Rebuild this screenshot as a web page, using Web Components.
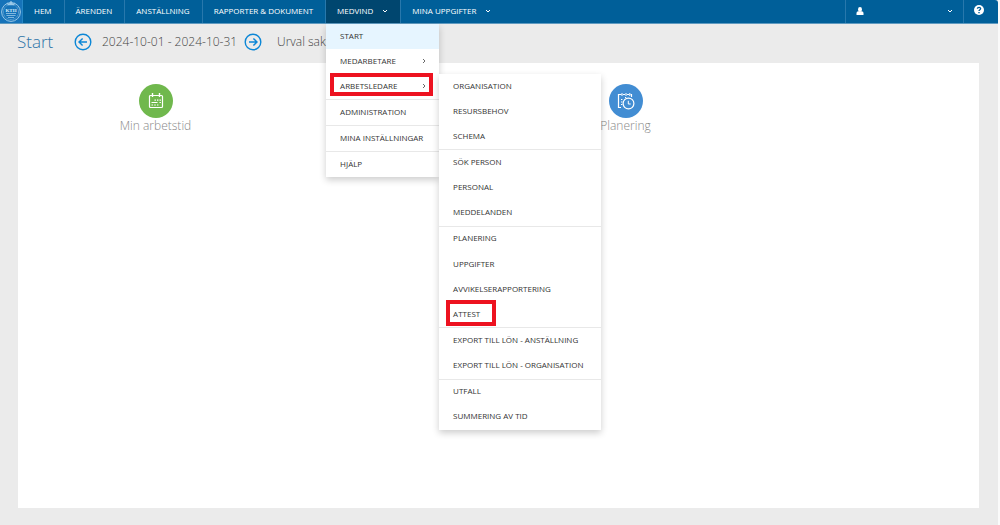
<!DOCTYPE html>
<html lang="sv">
<head>
<meta charset="utf-8">
<meta name="viewport" content="width=device-width, initial-scale=1">
<title>Start</title>
<style>
html { height: 100%; background: #fafafa; }
body { margin: 0; min-height: 100%; height: 100%; font-family: "Open Sans", "Noto Sans", sans-serif; }
</style>
</head>
<body>
<app-shell></app-shell>
<script>
const define = (name, html) => {
  const template = document.createElement('template');
  template.innerHTML = html;
  customElements.define(name, class extends HTMLElement {
    constructor() {
      super();
      this.attachShadow({ mode: 'open' }).append(template.content.cloneNode(true));
    }
  });
};

define('nav-item', `
<style>
:host { display: block; position: relative; border-right: 1px solid #2878ac; }
:host([active]) { background: #00466f; }
:host([last]) { border-color: transparent; }
button { display: flex; align-items: center; gap: 9px; height: 23px; box-sizing: border-box; padding: 0 12px 2px 11px; border: 0; background: none; color: #fff; font: 8px/12px "Open Sans", "Noto Sans", sans-serif; white-space: nowrap; cursor: pointer; }
svg { display: none; width: 6px; height: 6px; }
:host([menu]) svg { display: block; }
</style>
<button type="button"><slot></slot><svg viewBox="0 0 6 6"><path d="M1 2l2 2 2-2" fill="none" stroke="#fff"/></svg></button>
<slot name="menu"></slot>`);

define('menu-panel', `
<style>
:host { position: absolute; z-index: 2; display: flex; flex-direction: column; background: #fff; box-shadow: 0 3px 7px rgba(0,0,0,.2); top: 24px; left: 0; width: 113px; }
:host([level="2"]) { top: 0; left: 100%; width: 162px; min-height: 356px; z-index: 3; }
</style>
<slot></slot>`);

define('menu-item', `
<style>
:host { position: relative; display: flex; flex: 1 0 25px; }
:host([divided]) { border-bottom: 1px solid #e8e8e8; }
:host([current]) { background: #e6f5ff; }
a { flex: 1; display: flex; align-items: center; justify-content: space-between; padding: 0 12px 2px 14px; color: #333; font: 400 8px/12px "Open Sans", "Noto Sans", sans-serif; text-decoration: none; white-space: nowrap; }
svg { display: none; width: 6px; height: 6px; }
:host([parent]) svg { display: block; }
:host([marked])::after { content: ""; position: absolute; inset: -1px 6px 3px 4px; border: 4px solid #ed1220; pointer-events: none; }
:host([marked="short"])::after { inset: -2px auto 1px 7px; width: 42px; }
</style>
<a href="#"><slot></slot><svg viewBox="0 0 6 6"><path d="M2 1l2 2-2 2" fill="none" stroke="#444" stroke-width=".8"/></svg></a>
<slot name="menu"></slot>`);

define('kth-logo', `
<style>:host { display: block; width: 22px; height: 23px; background: #1673b9; border-right: 1px solid #2587c5; } svg { display: block; } text { font: 700 5px "Liberation Serif", serif; }</style>
<svg viewBox="0 0 22 23" width="22" height="23" role="img" aria-label="KTH" fill="none" stroke="#9bc9e8">
<circle cx="11" cy="12" r="9.4" stroke-width="1"/><circle cx="11" cy="12" r="7.6" stroke-width=".6" stroke-dasharray="1 .5"/>
<path d="M7 3l1 2h6l1-2-2 1-2-3-2 3z" fill="#9bc9e8" stroke-width=".5"/>
<text x="11" y="12" text-anchor="middle" fill="#d9edf9" stroke="none">KTH</text>
<path d="M6 13.5h10M6.5 15.5h9M8 17.5h6" stroke-width=".8"/></svg>`);

define('top-bar', `
<style>
:host { display: block; background: #005f99; border-bottom: 1px solid #5f9ac0; border-radius: 0 3px 0 0; height: 23px; position: relative; z-index: 2; }
nav { display: flex; height: 100%; }
.spacer { flex: 1; }
button { display: flex; align-items: center; border: 0; border-left: 1px solid #2878ac; background: none; padding: 0; cursor: pointer; }
.user { width: 118px; justify-content: space-between; padding: 0 10px 2px; }
.help { width: 35px; padding: 0 0 3px 10px; }
svg { display: block; }
</style>
<nav aria-label="Huvudmeny">
<kth-logo></kth-logo>
<nav-item>HEM</nav-item><nav-item>ÄRENDEN</nav-item><nav-item>ANSTÄLLNING</nav-item><nav-item>RAPPORTER &amp; DOKUMENT</nav-item>
<nav-item active menu>MEDVIND
 <menu-panel slot="menu">
  <menu-item current>START</menu-item>
  <menu-item parent>MEDARBETARE</menu-item>
  <menu-item parent divided marked>ARBETSLEDARE
   <menu-panel slot="menu" level="2">
    <menu-item>ORGANISATION</menu-item><menu-item>RESURSBEHOV</menu-item><menu-item divided>SCHEMA</menu-item>
    <menu-item>SÖK PERSON</menu-item><menu-item>PERSONAL</menu-item><menu-item divided>MEDDELANDEN</menu-item>
    <menu-item>PLANERING</menu-item><menu-item>UPPGIFTER</menu-item><menu-item>AVVIKELSERAPPORTERING</menu-item><menu-item divided marked="short">ATTEST</menu-item>
    <menu-item>EXPORT TILL LÖN - ANSTÄLLNING</menu-item><menu-item divided>EXPORT TILL LÖN - ORGANISATION</menu-item>
    <menu-item>UTFALL</menu-item><menu-item>SUMMERING AV TID</menu-item>
   </menu-panel>
  </menu-item>
  <menu-item divided>ADMINISTRATION</menu-item>
  <menu-item divided>MINA INSTÄLLNINGAR</menu-item>
  <menu-item>HJÄLP</menu-item>
 </menu-panel>
</nav-item>
<nav-item menu last>MINA UPPGIFTER</nav-item>
<span class="spacer"></span>
<button class="user" type="button" aria-label="Användare"><svg width="8" height="8" viewBox="0 0 8 8" fill="#fff"><ellipse cx="4" cy="2.4" rx="2" ry="2.4"/><path d="M.5 8V6Q.5 4.2 2.4 4.2h3.2Q7.5 4.2 7.5 6v2z"/></svg><svg width="6" height="6" viewBox="0 0 6 6"><path d="M1 2l2 2 2-2" fill="none" stroke="#fff"/></svg></button>
<button class="help" type="button" aria-label="Hjälp"><svg width="10" height="10" viewBox="0 0 10 10"><circle cx="5" cy="5" r="5" fill="#fff"/><path d="M3.4 3.8C3.5 1.9 6.7 1.9 6.6 3.8 6.5 4.8 5 4.8 5 6.1M5 7v1.2" fill="none" stroke="#005f99" stroke-width="1.4"/></svg></button>
</nav>`);

define('period-bar', `
<style>
:host { display: flex; align-items: center; height: 39px; padding: 0 0 4px 17px; box-sizing: border-box; color: #444; font-weight: 300; font-size: 12px; line-height: 18px; white-space: nowrap; }
h1 { margin: 0; width: 57px; color: #2f75a8; font-weight: 300; font-size: 17px; line-height: 24px; }
button { border: 0; padding: 0; background: none; width: 18px; height: 18px; cursor: pointer; }
svg { display: block; }
.dates { width: 132px; margin: 0 10px; }
.choice { margin-left: 15px; }
</style>
<h1>Start</h1>
<button type="button" aria-label="Föregående period"><svg width="18" height="18" viewBox="0 0 18 18" fill="none" stroke="#0c87d6" stroke-width="1.4"><circle cx="9" cy="9" r="7.8"/><path d="M13 9H5.2M8.6 5.4L5 9l3.6 3.6"/></svg></button>
<span class="dates">2024-10-01 - 2024-10-31</span>
<button type="button" aria-label="Nästa period"><svg width="18" height="18" viewBox="0 0 18 18" fill="none" stroke="#0c87d6" stroke-width="1.4"><circle cx="9" cy="9" r="7.8"/><path d="M5 9h7.8M9.4 5.4L13 9l-3.6 3.6"/></svg></button>
<span class="choice">Urval sak</span>`);

define('app-tile', `
<style>
a { display: flex; flex-direction: column; align-items: center; color: #888; font-weight: 300; font-size: 12px; line-height: 16px; text-decoration: none; }
.disc { display: grid; place-items: center; width: 34px; height: 34px; border-radius: 50%; background: var(--tile); }
</style>
<a href="#"><span class="disc"><slot name="icon"></slot></span><slot></slot></a>`);

define('app-shell', `
<style>
:host { display: flex; flex-direction: column; min-height: 100%; margin-right: 2px; background: #ebebeb; }
main { flex: 1; display: flex; flex-direction: column; }
section { flex: 1; display: grid; grid-template-columns: repeat(4, 1fr); align-items: start; margin: 0 19px 17px 18px; padding: 21px 1px 0 20px; background: #fff; }
.plan { grid-column: 3; }
svg { display: block; }
</style>
<top-bar></top-bar>
<main>
<period-bar></period-bar>
<section>
<app-tile style="--tile:#70b84d">Min arbetstid<svg slot="icon" width="16" height="16" viewBox="0 0 16 16" fill="none" stroke="#fff"><rect x="1.5" y="2.5" width="13" height="12" rx="1" stroke-width="1.2"/><path d="M4.5 0v4M11.5 0v4" stroke-width="1.4"/><path d="M6.5 7.2h1.4M9 7.2h1.4M11.5 7.2h1.4M3.5 9.5h6M11.5 9.5h1.4M3.5 12h1.6M6.2 12h1.6M9 12h1.4" stroke-width="1.2"/></svg></app-tile>
<app-tile class="plan" style="--tile:#428dd3">Planering<svg slot="icon" width="18" height="18" viewBox="0 0 18 18" fill="none" stroke="#fff"><path d="M4 15.5H1.5v-13h3M6 2.5h2M10 2.5h2M13.5 2.5h1V5" stroke-width="1.2"/><path d="M5 1v3M9 1v3M12.8 1v3" stroke-width="1"/><path d="M4 7.5h1.4M4 10h1.4M4 12.5h1.4M8 5.5h1.2" stroke-width="1"/><circle cx="11.5" cy="11.5" r="5.4" stroke-width="1.2"/><path d="M11.3 8.8V12h2.4"/></svg></app-tile>
</section>
</main>`);
</script>
</body>
</html>
